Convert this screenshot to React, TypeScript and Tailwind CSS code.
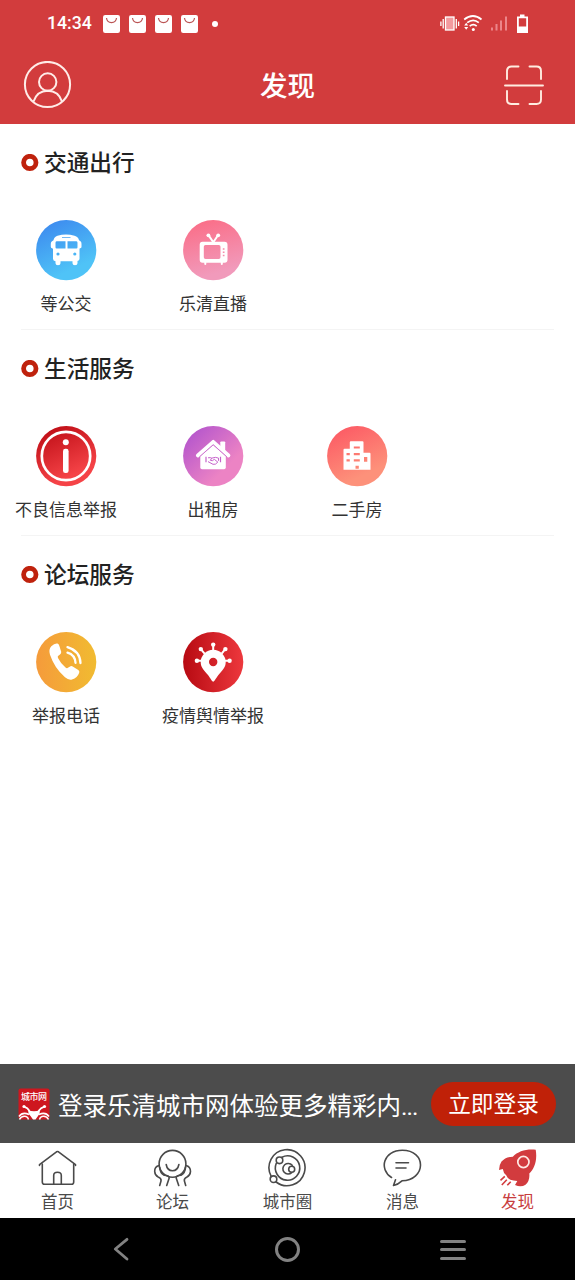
import type { ReactNode } from "react";

type Service = {
  label: string;
  from: string;
  to: string;
  angle: string;
  icon: ReactNode;
};

type Section = {
  title: string;
  items: Service[];
};

const sections: Section[] = [
  {
    title: "交通出行",
    items: [
      {
        label: "等公交",
        from: "#3b84ee",
        to: "#4fc3f7",
        angle: "rotate(65)",
        icon: (
          <path
            fillRule="evenodd"
            d="M22 16Q30.500 13.600 39 16Q43 17 43.500 20.500L45 21.500Q46 22 46 24V27Q46 28.500 44.500 28.500L44 29V39Q44 41 42 41.300V43.500Q42 45.500 39.500 45.500T37 43.500V41.500H25V43.500Q25 45.500 22.500 45.500T20 43.500V41.500Q17.500 41 17.500 39V29L16.500 28.500Q15.300 28 15.300 27V24Q15.300 22 16.500 21.500L18 20.500Q18.500 17 22 16ZM26.500 18.300H35V17.500H26.500ZM21 21.500Q20 21.500 20 23V27.500Q20 28.800 21 28.800H30V21.500ZM32 21.500V28.800H41Q42 28.800 42 27.500V23Q42 21.500 41 21.500ZM22.500 32.600A1.600 1.600 0 1 0 22.500 35.800A1.600 1.600 0 1 0 22.500 32.600ZM39.300 32.600A1.600 1.600 0 1 0 39.300 35.800A1.600 1.600 0 1 0 39.300 32.600Z"
          />
        ),
      },
      {
        label: "乐清直播",
        from: "#fb6a83",
        to: "#f19abb",
        angle: "rotate(75)",
        icon: (
          <>
            <path
              fillRule="evenodd"
              d="M20 22H42Q45 22 45 25V40Q45 43 42 43H20Q17.200 43 17.200 40V25Q17.200 22 20 22ZM23 25.300Q21.300 25.300 21.300 27V37.500Q21.300 39.300 23 39.300H36.300Q38 39.300 38 37.500V27Q38 25.300 36.300 25.300ZM40.300 28.500V30H42V28.500ZM40.300 31.800V33.200H42V31.800ZM40.300 35V36.500H42V35Z"
            />
            <path d="M30.800 22.500L26.300 15.800M30.800 22.500L35.500 15.500M22.800 42V44.300M39.300 42V44.300" fill="none" stroke="#fff" strokeWidth="2" strokeLinecap="round" />
            <circle cx="25.900" cy="15.500" r="1.900" />
            <circle cx="35.700" cy="15.500" r="1.900" />
          </>
        ),
      },
    ],
  },
  {
    title: "生活服务",
    items: [
      {
        label: "不良信息举报",
        from: "#b80710",
        to: "#f54347",
        angle: "rotate(65)",
        icon: (
          <>
            <circle cx="30.500" cy="30.200" r="24.200" fill="none" stroke="#fff" strokeWidth="2.700" />
            <circle cx="30.300" cy="16.500" r="3" />
            <rect x="27.500" y="23" width="5.600" height="24.300" rx="2.400" />
          </>
        ),
      },
      {
        label: "出租房",
        from: "#ab4ece",
        to: "#ec83c4",
        angle: "rotate(45)",
        icon: (
          <>
            <path d="M15.300 29.700L30.700 16L46 29.700" fill="none" stroke="#fff" strokeWidth="3.700" strokeLinecap="round" strokeLinejoin="round" />
            <path d="M37.800 16.500Q37.800 15.600 38.800 15.600H41.700Q42.700 15.600 42.700 16.500V26L37.800 21.500Z" />
            <path d="M17.800 30.500L30.700 19.300L43.300 30.500V41.500Q43.300 43.500 41.500 43.500H19.500Q17.800 43.500 17.800 41.500Z" />
            <path d="M17 31L30.700 19L44.300 31" fill="none" stroke="#c663cb" strokeWidth=".8" />
            <path d="M23.500 31V36.500M38 31V36.500" stroke="#c663cb" strokeWidth="1.200" />
            <path d="M25.500 32Q28 31.500 29.300 32.300L27.800 34.500Q30 35.800 31.800 33.500L35.300 36.300Q33 39.300 30.500 38.500L25.500 35.800M29.500 32.300Q33 30.800 36 32.300V35" fill="none" stroke="#c663cb" strokeWidth="1" />
          </>
        ),
      },
      {
        label: "二手房",
        from: "#fc5462",
        to: "#fd917a",
        angle: "rotate(65)",
        icon: (
          <path
            fillRule="evenodd"
            d="M24.300 15.500H36Q37 15.500 37 16.500V27H43Q44 27 44 28V44H17V24Q17 23 18 23H23.300V16.500Q23.300 15.500 24.300 15.500ZM27.300 20.700V22.800H33.300V20.700ZM20 27.200V29.500H23.300V27.200ZM27.300 27.200V29.500H33.300V27.200ZM20 33.500V35.800H23.300V33.500ZM27.300 33.500V35.800H33.300V33.500ZM37.500 31.300V36H40.800V31.300ZM29 40V43H32.300V40Z"
          />
        ),
      },
    ],
  },
  {
    title: "论坛服务",
    items: [
      {
        label: "举报电话",
        from: "#f59b3b",
        to: "#f1bb31",
        angle: "rotate(0)",
        icon: (
          <>
            <path d="M15.800 14.500Q19 11.300 22 11.800Q23.300 12.300 23.800 14L25.700 20Q26 21.500 24.500 22.700L22.500 24.300Q22 25 22.500 26.200Q25 31.500 30.300 36Q31.200 36.700 32 36.200L35 34.500Q36.200 34 37.200 34.700L42.800 38.200Q44.300 39.200 43.700 41Q42 46 36.500 47.700Q33 48.500 29.500 45.500Q19 36.500 14.500 23Q12.800 17.500 15.800 14.500Z" />
            <path d="M32 15.300Q44.500 19 45 31.300M32 20.800Q39.500 23 40 31" fill="none" stroke="#fff" strokeWidth="2.300" strokeLinecap="round" />
          </>
        ),
      },
      {
        label: "疫情舆情举报",
        from: "#b70a12",
        to: "#ed383d",
        angle: "rotate(0)",
        icon: (
          <>
            <path
              fillRule="evenodd"
              d="M30.700 50C29.500 50 28 46.500 25.500 43.300C22 39 18.200 36 18.200 30.500A12.500 12.500 0 0 1 43.200 30.500C43.200 36 39.400 39 35.900 43.300C33.400 46.500 31.900 50 30.700 50ZM30.700 26A4.200 4.200 0 1 0 30.700 34.400A4.200 4.200 0 1 0 30.700 26Z"
            />
            <path d="M30.700 19V12.700M22.300 22L18.300 17.300M39 22L42.700 17.300M20 29H14.300M41 29H47" stroke="#fff" strokeWidth="2" />
            <circle cx="30.700" cy="12.800" r="2.200" />
            <circle cx="18.300" cy="17.300" r="2.200" />
            <circle cx="42.900" cy="17.300" r="2.200" />
            <circle cx="14.400" cy="28.900" r="2.200" />
            <circle cx="47.100" cy="28.900" r="2.200" />
          </>
        ),
      },
    ],
  },
];

// Column widths of the service grid: the items sit on uneven centres.
const columns = ["w-[132px]", "w-[162px]", "w-[126px]"];

const tabs: { label: string; icon: ReactNode }[] = [
  {
    label: "首页",
    icon: (
      <>
        <path d="M1.500 17.500V16.700L18.500 3.800Q19.500 3.200 20.500 3.800L37.500 16.700V17.500" />
        <path d="M4.300 16V34Q4.300 36.300 6.600 36.300H33.500Q35.700 36.300 35.700 34V16" />
        <path d="M15.700 36V27.500Q15.700 24.300 19.500 24.300T23.300 27.500V36" />
      </>
    ),
  },
  {
    label: "论坛",
    icon: (
      <>
        <circle cx="19.500" cy="15.800" r="13.400" />
        <path d="M13.200 16.500Q14.200 22.500 19.500 22.800Q24.700 22.500 25.900 16.500" />
        <path d="M6.200 17.500Q1.500 18.500 1.700 23.500Q2 27.500 5.200 29Q8.700 30.500 8 33L6.700 37.500" />
        <path d="M32.900 17.500Q37.500 18.500 37.500 23.500Q37.200 27.500 34 29Q30.700 30.500 31.400 33L32.700 37.500" />
        <path d="M6.700 19.500Q7 25 11.200 27.200Q16.400 27.500 16.200 30L13.700 37.500" />
        <path d="M32.500 19.500Q32.200 25 28 27.200Q23 27.500 23.200 30L25.700 37.500" />
      </>
    ),
  },
  {
    label: "城市圈",
    icon: (
      <>
        <path d="M3.200 28.300A18 18 0 1 1 8.100 34" />
        <path d="M13.900 9.200A12.200 12.200 0 1 1 8.300 15.300" />
        <circle cx="11.500" cy="12.300" r="3.300" />
        <circle cx="5.500" cy="31.200" r="3.300" />
        <path d="M24.200 17.300A5.300 5.300 0 1 0 23.700 24.700" />
        <circle cx="23.700" cy="21.200" r="3" />
      </>
    ),
  },
  {
    label: "消息",
    icon: (
      <>
        <path d="M8.500 29.500C-4.500 21 .5 2.300 19.300 2.300C31.500 2.300 37.500 9.500 37.500 17C37.500 25 30.500 32.500 19 32.800Q15 36.500 10.500 37.500L12.500 31.800" />
        <path d="M13 14.800H25.500M13 20H23" />
      </>
    ),
  },
];

function StatusBar() {
  return (
    <div className="flex h-[47px] items-center pl-[47px] pr-[46px] text-white">
      <span className="w-[46px] pt-px font-['Roboto'] text-[17.700px] font-medium leading-none">14:34</span>
      <div className="ml-[10px] flex gap-[9px]">
        {[0, 1, 2, 3].map((i) => (
          <svg key={i} width="17" height="18" viewBox="0 0 17 18">
            <rect width="17" height="18" rx="2.200" fill="#fff" />
            <path d="M3.500 3Q4 7.500 8.500 7.700Q13 7.500 13.500 3" fill="none" stroke="#bb5555" strokeWidth="1.200" />
          </svg>
        ))}
      </div>
      <span className="ml-[14px] size-[6px] rounded-full bg-white" />
      <svg className="ml-auto" width="89" height="20" viewBox="0 0 89 20">
        <rect x="5.500" y="3" width="8.500" height="13" fill="#f39a9e" stroke="#fff" strokeWidth="1.300" />
        <path d="M3.200 5V14.500M.900 7.500V12M16.300 5V14.500M18.600 7.500V12" stroke="#fff" strokeWidth="1.300" />
        <g fill="none" stroke="#fff" strokeWidth="1.700">
          <path d="M24.200 5.500Q33 -1.500 41.500 5.500" />
          <path d="M27.200 8.700Q33.300 4 38.800 8.700" />
          <path d="M29.700 12.200Q33.300 9.200 36.700 12.200" />
        </g>
        <circle cx="33.300" cy="15.500" r="1.500" fill="#fff" />
        <path d="M24.200 11.500L26.200 8.800L28.200 11.500ZM24.200 13L26.200 15.800L28.200 13Z" fill="#fff" />
        <path d="M52 16.500V13.500M56.500 16.500V10M61 16.500V6.500M66 16.500V2.500" stroke="#ec858a" strokeWidth="2" />
        <path fillRule="evenodd" d="M80 .500H84.500V2.500H88V19H77V2.500H80ZM78.800 4.300V12.500H86.200V4.300Z" fill="#fff" />
      </svg>
    </div>
  );
}

function Header() {
  return (
    <header className="h-[124px] bg-[#d23c3d]">
      <StatusBar />
      <div className="flex h-[76px] items-center justify-between pl-[23px] pr-[30px]">
        <svg width="49" height="49" viewBox="0 0 49 49" fill="none" stroke="#ffece8" strokeWidth="2">
          <circle cx="24.500" cy="23.500" r="22.600" />
          <circle cx="24.700" cy="21" r="8.700" />
          <path d="M10.500 40.500Q14 30 24.700 29.800Q35.500 30 39 40.500" />
        </svg>
        <h1 className="pr-px text-[27.500px] font-medium leading-none text-white">发现</h1>
        <svg width="41" height="42" viewBox="0 0 41 42" fill="none" stroke="#ffece0" strokeWidth="1.900" strokeLinecap="round">
          <path d="M3 15V7Q3 2.500 7.500 2.500H14.500M25.500 2.500H32.500Q37 2.500 37 7V15M37 27V35.500Q37 40 32.500 40H25.500M14.500 40H7.500Q3 40 3 35.500V27M1 21.500H39" />
        </svg>
      </div>
    </header>
  );
}

function ServiceItem({ item, id }: { item: Service; id: string }) {
  return (
    <div className="flex flex-col items-center">
      <svg width="61" height="61" viewBox="0.500 0.200 61 61" fill="#fff">
        <defs>
          <linearGradient id={id} gradientTransform={item.angle}>
            <stop offset="0" stopColor={item.from} />
            <stop offset="1" stopColor={item.to} />
          </linearGradient>
        </defs>
        <circle cx="30.700" cy="30.300" r="30.100" fill={`url(#${id})`} />
        {item.icon}
      </svg>
      <span className="mt-[10px] whitespace-nowrap text-[17px] leading-6 text-[#333]">{item.label}</span>
    </div>
  );
}

function ServiceSection({ section, index }: { section: Section; index: number }) {
  const last = index === sections.length - 1;
  return (
    <section className="h-[206px]">
      <div className="flex h-[77px] items-center gap-[5px] pl-[21px]">
        <svg width="18" height="18" viewBox="0 0 18 18">
          <circle cx="8.800" cy="8.500" r="6.200" fill="none" stroke="#bf220d" strokeWidth="4.800" />
        </svg>
        <h2 className="text-[22.700px] font-medium leading-none text-[#222]">{section.title}</h2>
      </div>
      <div className="flex h-[128px] pt-[19px]">
        {section.items.map((item, i) => (
          <div key={item.label} className={`${columns[i]} flex justify-center`}>
            <ServiceItem item={item} id={`service-${index}-${i}`} />
          </div>
        ))}
      </div>
      {!last && <div className="mx-[21px] h-px bg-[#f4f4f4]" />}
    </section>
  );
}

function LoginBar() {
  return (
    <div className="flex h-[79px] items-center bg-[#4c4c4c] pl-[18px] pr-[19px]">
      <svg width="32" height="32" viewBox="0 0 32 32">
        <rect x=".500" y=".500" width="31" height="31" rx="2" fill="#ce171f" />
        <text x="16" y="12" textAnchor="middle" fontSize="9" fontWeight="500" fill="#fff" textLength="26">
          城市网
        </text>
        <path d="M10 22Q16 24.500 22 22Q22 26 20 28L17.500 31.500H15L12.500 28Q10 26 10 22Z" fill="#fff" />
        <path d="M6.500 18.800Q9.500 19.500 11.500 23M26 18.800Q23 19.500 20.500 23" fill="none" stroke="#fff" strokeWidth="1.800" />
        <circle cx="6" cy="18.500" r="1.600" fill="#fff" />
        <circle cx="26.500" cy="18.500" r="1.600" fill="#fff" />
        <path d="M1 28.500Q4.500 23.500 11 26.500M31 28.500Q27.500 23.500 21 26.500M1.500 31.500Q3.500 27.500 8 28.500Q10 29 10.500 31.500M30.500 31.500Q28.500 27.500 24 28.500Q22 29 21.500 31.500" fill="none" stroke="#fff" strokeWidth="1.500" />
      </svg>
      <p className="ml-[8px] w-[365px] whitespace-nowrap pt-[5px] text-[24.500px] leading-none text-white">
        登录乐清城市网体验更多精彩内<span className="font-['Roboto'] tracking-[-1px]">...</span>
      </p>
      <button className="ml-[8px] h-[44px] w-[125px] shrink-0 rounded-full bg-[#c02108] pb-px text-[22.700px] leading-none text-white">
        立即登录
      </button>
    </div>
  );
}

function TabBar() {
  return (
    <nav className="grid h-[75px] grid-cols-5 bg-white pt-[5px] text-[16.500px] leading-[24px] text-[#4a4a4a]">
      {tabs.map((tab) => (
        <div key={tab.label} className="flex flex-col items-center">
          <svg width="40" height="40" viewBox="0 0 40 40" fill="none" stroke="#4a4a4a" strokeWidth="1.600" strokeLinecap="round" strokeLinejoin="round">
            {tab.icon}
          </svg>
          <span className="mt-[1px]">{tab.label}</span>
        </div>
      ))}
      <div className="flex flex-col items-center text-[#c83e3e]">
        <svg width="40" height="40" viewBox="0 0 40 40" fill="#d23b3e">
          <path d="M37.700 1.800C28 .8 20 3.500 14.800 8.700Q7.500 8.700 3.500 13.500Q1 17 1 22L4.800 21Q5.500 25.500 8.200 27.300Q10 32 15.500 32.500L19.300 33L17 37Q23 39.700 27.500 36.700Q32 33 31.300 25.500C36.500 20.500 39.500 12 37.700 1.800Z" />
          <circle cx="25.400" cy="14" r="5.600" fill="none" stroke="#ffe9e4" strokeWidth="1.700" />
          <path d="M6.800 28.300L2.500 32.300M8.800 31.800L3.800 37M12.700 33.800L9.300 37.300" stroke="#d23b3e" strokeWidth="1.600" />
        </svg>
        <span className="mt-[1px]">发现</span>
      </div>
    </nav>
  );
}

function SystemNav() {
  return (
    <div className="flex h-[62px] items-center justify-between bg-black pl-[113px] pr-[109px]">
      <svg width="16" height="24" viewBox="0 0 16 24" fill="none" stroke="#828282" strokeWidth="2.800" strokeLinecap="round" strokeLinejoin="round">
        <path d="M14 2.300L2.300 12L14 22" />
      </svg>
      <span className="ml-[6px] size-[25px] rounded-full border-[3px] border-[#828282]" />
      <div className="flex w-[26px] flex-col gap-[5.500px] pt-px">
        <span className="h-[3px] rounded-full bg-[#828282]" />
        <span className="h-[3px] rounded-full bg-[#828282]" />
        <span className="h-[3px] rounded-full bg-[#828282]" />
      </div>
    </div>
  );
}

export default function App() {
  return (
    <div className="flex h-[1280px] w-[575px] flex-col overflow-hidden bg-white font-['Noto_Sans_CJK_SC',sans-serif]">
      <Header />
      <main className="flex-1">
        {sections.map((section, i) => (
          <ServiceSection key={section.title} section={section} index={i} />
        ))}
      </main>
      <LoginBar />
      <TabBar />
      <SystemNav />
    </div>
  );
}
